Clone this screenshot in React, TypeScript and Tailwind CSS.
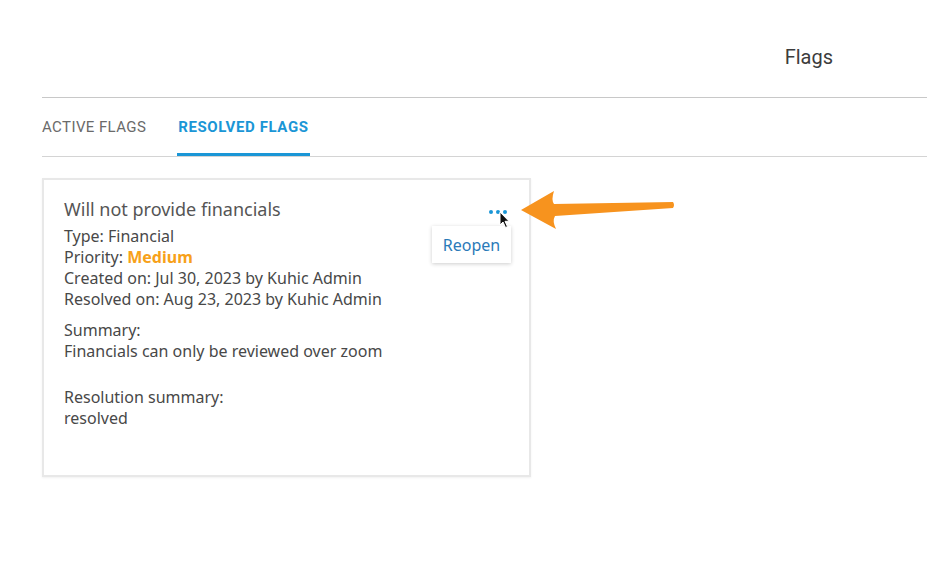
const font = { fontFamily: 'Roboto, "Liberation Sans", sans-serif' };
const bodyFont = { fontFamily: '"Noto Sans", Roboto, sans-serif' };

function OrangeArrow() {
  return (
    <svg width="160" height="44" viewBox="0 0 160 44" className="absolute left-[518px] top-[188px]">
      <path
        d="M3 22 L36 3 Q33 12 36 16 L155 14 Q157 17 155 20 L37 28 Q34 33 38 41 Z"
        fill="#f7931e"
      />
    </svg>
  );
}

function Cursor() {
  return (
    <svg width="12" height="18" viewBox="0 0 12 18" className="absolute left-[499px] top-[211px]">
      <path d="M1 1 L1 14 L4 11 L6.5 16.5 L8.5 15.6 L6 10.3 L10 10.3 Z" fill="#111" stroke="#fff" strokeWidth="1" />
    </svg>
  );
}

export default function App() {
  return (
    <div className="relative w-[927px] h-[580px] bg-white overflow-hidden" style={font}>
      <div className="flex justify-end h-[97px] pt-[44px] pr-[94px]">
        <h1 className="text-[20px] leading-[26px] text-[#3c3c3c]">Flags</h1>
      </div>
      <div className="ml-[42px] border-t border-[#c8c8c8]">
        <div className="flex gap-[31px] border-b border-[#d4d4d4] h-[59px]">
          <div className="pt-[18px] text-[15px] tracking-[0.4px] text-[#6a6a6a]">ACTIVE FLAGS</div>
          <div className="pt-[18px] text-[15px] tracking-[0.6px] font-bold text-[#1a96d6] border-b-[3px] border-[#1a96d6] px-px">
            RESOLVED FLAGS
          </div>
        </div>
        <div className="pt-[21px]" style={bodyFont}>
          <div className="w-[489px] h-[299px] border-2 border-[#e8e8e8] shadow-[0_1px_2px_rgba(0,0,0,0.06)] px-[20px] pt-[17px] relative">
            <div className="flex items-start justify-between">
              <h2 className="text-[18px] leading-[25px] text-[#555]">Will not provide financials</h2>
              <div className="flex gap-[3px] mt-[13px] mr-[2px]">
                <span className="w-[4px] h-[4px] rounded-full bg-[#1a96d6]" />
                <span className="w-[4px] h-[4px] rounded-full bg-[#1a96d6]" />
                <span className="w-[4px] h-[4px] rounded-full bg-[#1a96d6]" />
              </div>
            </div>
            <div className="mt-[4px] text-[16px] leading-[21px] text-[#484848]">
              <p>Type: Financial</p>
              <p>
                Priority: <span className="font-bold text-[#f7a11a]">Medium</span>
              </p>
              <p>Created on: Jul 30, 2023 by Kuhic Admin</p>
              <p>Resolved on: Aug 23, 2023 by Kuhic Admin</p>
              <p className="mt-[10px]">Summary:</p>
              <p>Financials can only be reviewed over zoom</p>
              <p className="mt-[25px]">Resolution summary:</p>
              <p>resolved</p>
            </div>
          </div>
        </div>
      </div>
      <div
        className="absolute left-[432px] top-[226px] w-[79px] h-[37px] bg-white shadow-[0_1px_4px_rgba(0,0,0,0.2)] flex items-center justify-center text-[16px] text-[#2a7ab8]"
        style={bodyFont}
      >
        Reopen
      </div>
      <Cursor />
      <OrangeArrow />
    </div>
  );
}
